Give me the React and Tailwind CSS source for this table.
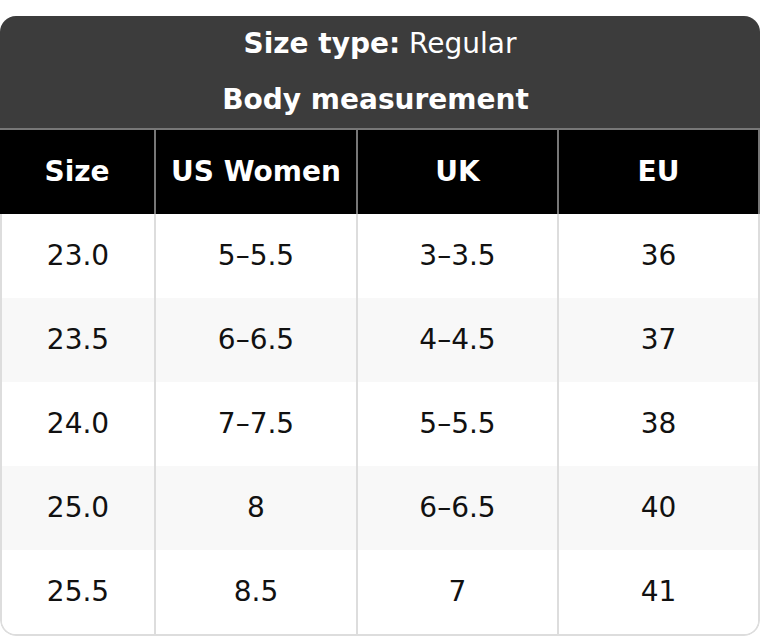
import React from "react";

const rows = [
  ["23.0", "5–5.5", "3–3.5", "36"],
  ["23.5", "6–6.5", "4–4.5", "37"],
  ["24.0", "7–7.5", "5–5.5", "38"],
  ["25.0", "8", "6–6.5", "40"],
  ["25.5", "8.5", "7", "41"],
];

const cols = ["w-[154px]", "w-[202px]", "w-[201px]", "flex-1"];

export default function App() {
  return (
    <div className="bg-white w-[760px] h-[636px] pt-4" style={{ fontFamily: '"DejaVu Sans", sans-serif' }}>
      <div className="rounded-2xl overflow-hidden text-[28px]">
        {/* title block */}
        <div className="bg-[#3c3c3c] text-white">
          <div className="h-14 flex items-center justify-center">
            <span className="font-bold">Size type:</span>&nbsp;Regular
          </div>
          <div className="h-14 flex items-center justify-center font-bold pr-[9px]">Body measurement</div>
        </div>
        <div className="h-[2px] bg-[#777]" />

        {/* column headers */}
        <div className="flex h-[84px] bg-black text-white font-bold border-r-2 border-[#777]">
          {["Size", "US Women", "UK", "EU"].map((h, i) => (
            <div
              key={h}
              className={`${cols[i]} flex items-center justify-center ${i > 0 ? "border-l-2 border-[#777]" : ""}`}
            >
              {h}
            </div>
          ))}
        </div>

        {/* body */}
        <div className="border-x-2 border-b-2 border-[#ddd] rounded-b-2xl overflow-hidden text-[#111]">
          {rows.map((r, ri) => (
            <div key={ri} className={`flex h-[84px] ${ri % 2 ? "bg-[#f8f8f8]" : "bg-white"}`}>
              {r.map((c, i) => (
                <div
                  key={i}
                  className={`${i === 0 ? "w-[152px]" : cols[i]} flex items-center justify-center ${i > 0 ? "border-l-2 border-[#ddd]" : ""}`}
                >
                  {c}
                </div>
              ))}
            </div>
          ))}
        </div>
      </div>
    </div>
  );
}
